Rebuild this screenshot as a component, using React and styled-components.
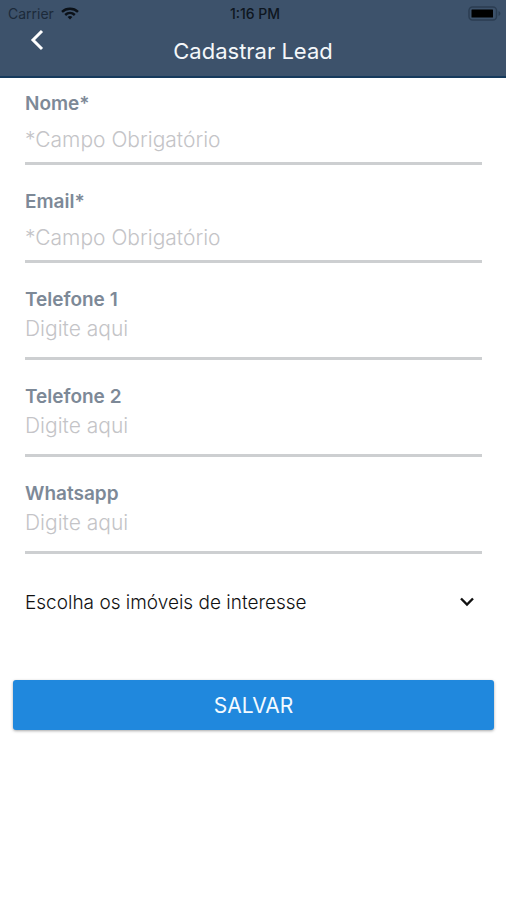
import React from 'react';
import styled, { createGlobalStyle } from 'styled-components';

const fields = [
  { id: 'nome', label: 'Nome*', type: 'text', placeholder: '*Campo Obrigatório', required: true },
  { id: 'email', label: 'Email*', type: 'email', placeholder: '*Campo Obrigatório', required: true },
  { id: 'telefone1', label: 'Telefone 1', type: 'tel', placeholder: 'Digite aqui' },
  { id: 'telefone2', label: 'Telefone 2', type: 'tel', placeholder: 'Digite aqui' },
  { id: 'whatsapp', label: 'Whatsapp', type: 'tel', placeholder: 'Digite aqui' },
];

const WifiIcon = () => (
  <svg width="18" height="13" viewBox="0 0 18 13" fill="none" stroke="#0b1118" strokeWidth="2.4" aria-hidden="true">
    <path d="M1 4.8C5.4 0.7 12.6 0.7 17 4.8" />
    <path d="M4.2 8C7 5.4 11 5.4 13.8 8" />
    <path d="M9 12.4L6.6 9.9C8 8.8 10 8.8 11.4 9.9Z" fill="#0b1118" stroke="none" />
  </svg>
);

const BatteryIcon = () => (
  <svg width="34" height="15" viewBox="0 0 34 15" aria-hidden="true">
    <rect x="1" y="1" width="27.5" height="13" rx="3.5" fill="none" stroke="#2b3d52" strokeWidth="1.5" />
    <rect x="3.5" y="3.5" width="21.5" height="8" rx="0.5" fill="#000" />
    <path d="M30.5 5C33 5.8 33 9.2 30.5 10Z" fill="#2b3d52" />
  </svg>
);

const CadastrarLead = () => {
  return (
    <Page>
      <GlobalStyle />
      <Header>
        <StatusBar>
          <Carrier>
            Carrier
            <WifiIcon />
          </Carrier>
          <Clock>1:16 PM</Clock>
          <Battery>
            <BatteryIcon />
          </Battery>
        </StatusBar>
        <NavBar>
          <BackButton type="button" aria-label="Voltar">
            <svg width="14" height="22" viewBox="0 0 14 22" fill="none" stroke="#fff" strokeWidth="3">
              <path d="M12 2L3 11L12 20" />
            </svg>
          </BackButton>
          <Title>Cadastrar Lead</Title>
        </NavBar>
      </Header>

      <Form onSubmit={(e) => e.preventDefault()}>
        <Fields>
          {fields.map((field) => (
            <Field key={field.id}>
              <Label htmlFor={field.id}>{field.label}</Label>
              <Input
                id={field.id}
                name={field.id}
                type={field.type}
                placeholder={field.placeholder}
                required={field.required}
                $tall={field.required}
              />
            </Field>
          ))}
          <SelectRow>
            <Select name="imoveis" aria-label="Escolha os imóveis de interesse" defaultValue="">
              <option value="">Escolha os imóveis de interesse</option>
            </Select>
            <Chevron width="16" height="12" viewBox="0 0 16 12" aria-hidden="true">
              <path d="M2 2.5L8 8.5L14 2.5" />
            </Chevron>
          </SelectRow>
        </Fields>
        <SaveButton type="submit">SALVAR</SaveButton>
      </Form>
    </Page>
  );
};

const GlobalStyle = createGlobalStyle`
  * {
    box-sizing: border-box;
  }

  body {
    margin: 0;
    background: #fff;
    font-family: Inter, 'Liberation Sans', sans-serif;
  }

  button, input, select {
    font-family: inherit;
  }
`;

const Page = styled.main`
  min-height: 100vh;
  background: #fff;
`;

const Header = styled.header`
  background: #3d526b;
  border-bottom: 2px solid #163a5c;
`;

const StatusBar = styled.div`
  display: grid;
  grid-template-columns: 1fr auto 1fr;
  align-items: center;
  height: 26px;
  padding: 0 4px 0 8px;
  font-size: 14px;
`;

const Carrier = styled.span`
  display: flex;
  align-items: center;
  gap: 7px;
  color: #1c2a3a;
`;

const Clock = styled.span`
  color: #0e1620;
  font-weight: 500;
`;

const Battery = styled.span`
  display: flex;
  justify-content: flex-end;
`;

const NavBar = styled.div`
  display: grid;
  grid-template-columns: 48px 1fr 48px;
  align-items: center;
  height: 50px;
`;

const BackButton = styled.button`
  display: flex;
  align-self: start;
  justify-content: flex-end;
  padding: 3px 4px;
  border: 0;
  background: none;
  cursor: pointer;
`;

const Title = styled.h1`
  margin: 0;
  color: #f4f7fa;
  font-size: 22px;
  font-weight: 400;
  line-height: 30px;
  text-align: center;
`;

const Form = styled.form`
  display: flex;
  flex-direction: column;
  padding: 13px 12px 13px 13px;
`;

const Fields = styled.div`
  display: flex;
  flex-direction: column;
  gap: 24px;
  padding: 0 12px;
`;

const Field = styled.div`
  display: flex;
  flex-direction: column;
  border-bottom: 3px solid #cdcfd1;
`;

const Label = styled.label`
  color: #7d8997;
  font-size: 19px;
  font-weight: 600;
  line-height: 26px;
`;

const Input = styled.input`
  width: 100%;
  height: ${({ $tall }) => ($tall ? '45px' : '44px')};
  padding: ${({ $tall }) => ($tall ? '0' : '0 0 14px')};
  border: 0;
  outline: 0;
  background: none;
  color: #333;
  font-size: 21px;
  font-weight: 300;

  &::placeholder {
    color: #c4c4c7;
    opacity: 1;
  }
`;

const SelectRow = styled.div`
  display: grid;
  align-items: center;
`;

const Select = styled.select`
  grid-area: 1 / 1;
  width: 100%;
  height: 48px;
  padding: 0;
  border: 0;
  background: none;
  appearance: none;
  color: #111;
  font-size: 19px;
  font-weight: 300;
`;

const Chevron = styled.svg`
  grid-area: 1 / 1;
  justify-self: end;
  margin-right: 7px;
  fill: none;
  stroke: #111;
  stroke-width: 2.4;
  pointer-events: none;
`;

const SaveButton = styled.button`
  height: 50px;
  margin-top: 54px;
  border: 0;
  border-radius: 3px;
  background: #2088dd;
  box-shadow: 0 1px 3px rgba(0, 0, 0, 0.35);
  color: #f4faff;
  font-size: 21px;
  cursor: pointer;
`;

export default CadastrarLead;
